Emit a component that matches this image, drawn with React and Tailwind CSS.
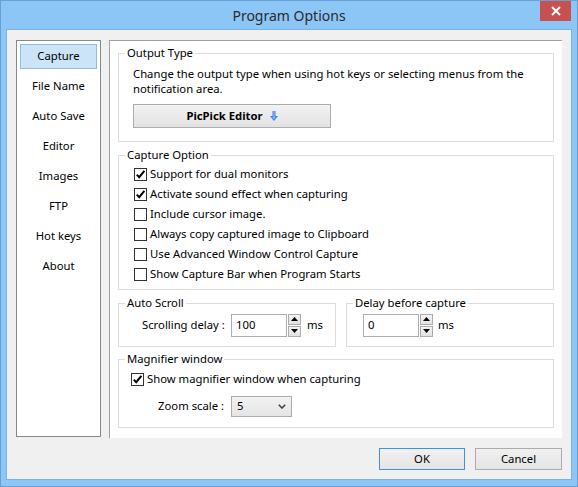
import React from 'react'

const Check = ({ checked }) => (
  <span className="w-[13px] h-[13px] border border-[#333333] bg-white flex items-center justify-center shrink-0">
    {checked && (
      <svg width="11" height="11" viewBox="0 0 11 11">
        <path d="M1.8 5.6 L4.2 8.2 L9.4 1.8" fill="none" stroke="#000" strokeWidth="2" />
      </svg>
    )}
  </span>
)

const Group = ({ label, className, children }) => (
  <div className={'relative border border-[#dcdcdc] ' + className}>
    <span className="absolute left-[6px] top-[-9px] bg-white px-[2px] leading-[16px]">{label}</span>
    {children}
  </div>
)

const Spin = () => (
  <div className="flex flex-col gap-[1px] ml-[1px]">
    {['up', 'down'].map(d => (
      <span
        key={d}
        className="w-[13px] h-[11px] border border-[#acacac] bg-gradient-to-b from-[#f4f4f4] to-[#e2e2e2] flex items-center justify-center"
      >
        <svg width="7" height="4" viewBox="0 0 7 4">
          {d === 'up' ? <path d="M0 4 L3.5 0 L7 4 Z" fill="#000" /> : <path d="M0 0 L3.5 4 L7 0 Z" fill="#000" />}
        </svg>
      </span>
    ))}
  </div>
)

const Field = ({ value }) => (
  <div className="w-[56px] h-[23px] border border-[#abadb3] bg-white flex items-center pl-[4px]">{value}</div>
)

const menu = ['Capture', 'File Name', 'Auto Save', 'Editor', 'Images', 'FTP', 'Hot keys', 'About']

const options = [
  ['Support for dual monitors', true],
  ['Activate sound effect when capturing', true],
  ['Include cursor image.', false],
  ['Always copy captured image to Clipboard', false],
  ['Use Advanced Window Control Capture', false],
  ['Show Capture Bar when Program Starts', false],
]

export default function App() {
  return (
    <div className="w-[578px] h-[487px] bg-[#8bc6f7] border border-[#6a9fd3] flex flex-col font-['Noto_Sans',sans-serif] text-[11.3px] text-black">
      {/* title bar */}
      <div className="h-[28px] grid grid-cols-[1fr_auto_1fr]">
        <div />
        <div className="text-[14px] text-[#2b2b2b] leading-[28px] pt-[1px]">Program Options</div>
        <div className="flex justify-end pr-[6px]">
          <div className="w-[31px] h-[20px] bg-[#c75050] flex items-center justify-center">
            <svg width="10" height="10" viewBox="0 0 10 10">
              <path d="M1 1 L9 9 M9 1 L1 9" stroke="#fff" strokeWidth="2" />
            </svg>
          </div>
        </div>
      </div>

      {/* client */}
      <div className="mx-[5px] h-[451px] border border-[#7eb1df] bg-[#f0f0f0] flex flex-col">
        <div className="flex pt-[10px] pl-[9px] gap-[8px]">
          <div className="w-[85px] h-[397px] border border-[#828790] bg-white flex flex-col gap-[5px] pt-[3px] px-[3px]">
            {menu.map((m, i) => (
              <div
                key={m}
                className={
                  'h-[25px] flex items-center justify-center border ' +
                  (i === 0 ? 'bg-[#cce4f7] border-[#8cbde8]' : 'border-transparent')
                }
              >
                {m}
              </div>
            ))}
          </div>

          <div className="w-[453px] h-[398px] bg-white border-t border-l border-[#a0a0a0] flex flex-col pl-[8px] pt-[12px]">
            <Group label="Output Type" className="w-[436px] h-[89px] pl-[14px] pt-[12px]">
              <div className="leading-[15px]">
                Change the output type when using hot keys or selecting menus from the
                <br />
                notification area.
              </div>
              <div className="mt-[8px] w-[198px] h-[24px] border border-[#acacac] bg-gradient-to-b from-[#f2f2f2] to-[#e3e3e3] flex items-center justify-center gap-[7px] font-bold">
                <span>PicPick Editor</span>
                <svg width="8" height="10" viewBox="0 0 8 10">
                  <path d="M2.5 0 H5.5 V5 H8 L4 10 L0 5 H2.5 Z" fill="#3c7ee6" />
                  <path d="M3.3 0 H4.7 V6 H6 L4 8.5 L2 6 H3.3 Z" fill="#7fb2ff" />
                </svg>
              </div>
            </Group>

            <Group label="Capture Option" className="mt-[13px] w-[436px] h-[135px] pl-[15px] pt-[8px]">
              {options.map(([t, c]) => (
                <div key={t} className="h-[20px] flex items-center gap-[3px]">
                  <Check checked={c} />
                  <span>{t}</span>
                </div>
              ))}
            </Group>

            <div className="mt-[13px] flex gap-[10px]">
              <Group label="Auto Scroll" className="w-[218px] h-[44px] pl-[23px] flex items-center">
                <span className="w-[89px]">Scrolling delay :</span>
                <Field value="100" />
                <Spin />
                <span className="ml-[6px]">ms</span>
              </Group>
              <Group label="Delay before capture" className="w-[208px] h-[44px] pl-[16px] flex items-center">
                <Field value="0" />
                <Spin />
                <span className="ml-[5px]">ms</span>
              </Group>
            </div>

            <Group label="Magnifier window" className="mt-[12px] w-[436px] h-[69px] pl-[12px] pt-[9px]">
              <div className="h-[20px] flex items-center gap-[3px]">
                <Check checked />
                <span>Show magnifier window when capturing</span>
              </div>
              <div className="mt-[7px] flex items-center pl-[27px]">
                <span className="w-[73px]">Zoom scale :</span>
                <div className="w-[61px] h-[21px] border border-[#acacac] bg-gradient-to-b from-[#f2f2f2] to-[#e5e5e5] flex items-center justify-between pl-[5px] pr-[5px]">
                  <span>5</span>
                  <svg width="8" height="5" viewBox="0 0 8 5">
                    <path d="M0.8 0.8 L4 4 L7.2 0.8" fill="none" stroke="#444" strokeWidth="1.6" />
                  </svg>
                </div>
              </div>
            </Group>
          </div>
        </div>

        <div className="mt-[10px] flex justify-end gap-[10px] pr-[9px]">
          <div className="w-[86px] h-[22px] border border-[#3c93e6] bg-gradient-to-b from-[#f0f0f0] to-[#e5e5e5] flex items-center justify-center">
            OK
          </div>
          <div className="w-[87px] h-[22px] border border-[#acacac] bg-gradient-to-b from-[#f0f0f0] to-[#e5e5e5] flex items-center justify-center">
            Cancel
          </div>
        </div>
      </div>
    </div>
  )
}
